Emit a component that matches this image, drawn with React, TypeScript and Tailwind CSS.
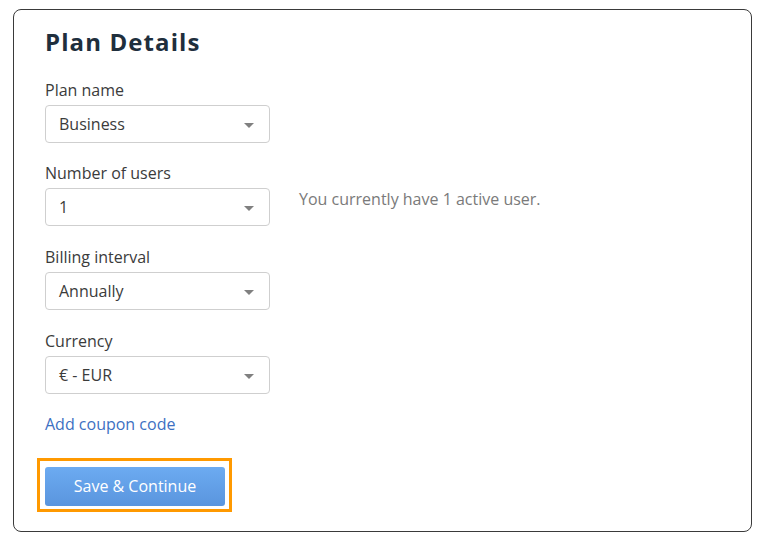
const fields = [
  { label: "Plan name", value: "Business" },
  { label: "Number of users", value: "1", note: "You currently have 1 active user." },
  { label: "Billing interval", value: "Annually" },
  { label: "Currency", value: "€ - EUR" },
];

const Caret = () => (
  <svg width="10" height="5" viewBox="0 0 10 5" className="shrink-0 mt-[2px]">
    <path d="M0 0 L10 0 L5 5 Z" fill="#808080" />
  </svg>
);

export default function App() {
  return (
    <div
      className="bg-white w-[758px] h-[540px] pl-[13px] pt-[9px]"
      style={{ fontFamily: '"Open Sans", "Noto Sans", sans-serif' }}
    >
      <div className="w-[739px] h-[523px] border border-[#3a3a3a] rounded-[8px] px-[31px] pt-[16px]">
        <h1 className="text-[24px] leading-8 font-bold tracking-[1.1px] text-[#1f2f3d]">Plan Details</h1>

        <div className="mt-[20px] flex flex-col">
          {fields.map((f, i) => (
            <div key={f.label} className={i === 0 ? "" : i === 1 ? "mt-[18px]" : "mt-[19px]"}>
              <div className="text-[16px] leading-6 text-[#3b3b3b]">{f.label}</div>
              <div className="mt-[3px] flex items-center">
                <div className="w-[225px] h-[38px] border border-[#cfcfcf] rounded-[4px] pl-[13px] pr-[15px] flex items-center justify-between">
                  <span className="text-[16px] text-[#3b3b3b]">{f.value}</span>
                  <Caret />
                </div>
                {f.note && (
                  <span className="ml-[29px] -mt-[16px] text-[16px] text-[#7a7a7a]">{f.note}</span>
                )}
              </div>
            </div>
          ))}
        </div>

        <div className="mt-[18px] text-[16px] leading-6 text-[#3d70c2]">Add coupon code</div>

        <div className="mt-[22px] -ml-[8px] inline-flex border-[3px] border-[#ff9900] pt-[6px] pb-[3px] pl-[5px] pr-[4px]">
          <button className="w-[180px] h-[39px] rounded-[3px] bg-gradient-to-b from-[#6cabf1] to-[#5a95de] text-white text-[16px] leading-6 pb-[2px]">
            Save &amp; Continue
          </button>
        </div>
      </div>
    </div>
  );
}
